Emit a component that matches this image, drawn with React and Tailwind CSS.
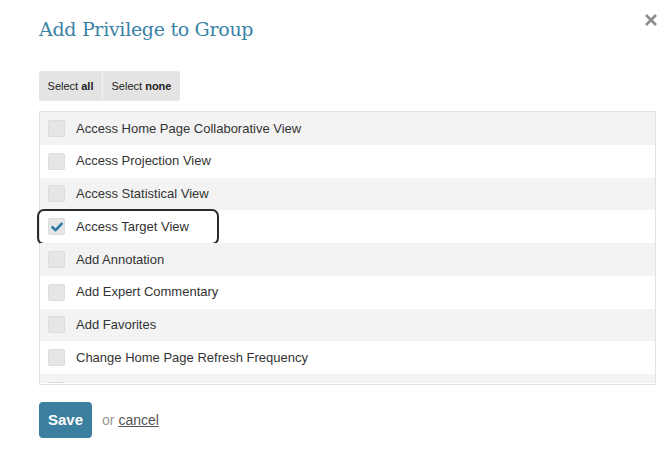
import React, { useState } from 'react';

const privileges = [
  'Access Home Page Collaborative View',
  'Access Projection View',
  'Access Statistical View',
  'Access Target View',
  'Add Annotation',
  'Add Expert Commentary',
  'Add Favorites',
  'Change Home Page Refresh Frequency',
];

const Check = ({ checked }) => (
  <span className="w-[17px] h-[17px] shrink-0 rounded-[2px] bg-[#e6e6e6] border border-[#dcdcdc] flex items-center justify-center">
    {checked && (
      <svg width="12" height="10" viewBox="0 0 12 10">
        <path d="M1.5 5.2 L4.6 8.2 L10.6 1.8" fill="none" stroke="#2f7ca3" strokeWidth="2.6" strokeLinecap="round" strokeLinejoin="round" />
      </svg>
    )}
  </span>
);

export default function App() {
  const [selected, setSelected] = useState(['Access Target View']);

  const toggle = (name) =>
    setSelected((s) => (s.includes(name) ? s.filter((x) => x !== name) : [...s, name]));

  return (
    <div className="w-[669px] h-[449px] bg-white relative font-['Liberation_Sans',Arial,sans-serif] text-[#333]">
      <button className="absolute top-[13px] left-[644px] w-[14px] h-[14px]" aria-label="Close">
        <svg width="14" height="14" viewBox="0 0 14 14">
          <path d="M2 2 L12 12 M12 2 L2 12" stroke="#8c8c8c" strokeWidth="2.6" />
        </svg>
      </button>

      <div className="pl-[39px] pr-[13px] pt-[15px]">
        <h1 className="font-['DejaVu_Serif',serif] text-[19px] tracking-[-0.3px] leading-[28px] text-[#3b83a6]">
          Add Privilege to Group
        </h1>

        <div className="mt-[28px] flex w-max rounded-[3px] overflow-hidden bg-[#e4e4e4] text-[11px] text-[#222]">
          <button className="h-[30px] w-[64px] border-r border-[#f2f2f2]">
            Select <span className="font-bold">all</span>
          </button>
          <button className="h-[30px] w-[77px]">
            Select <span className="font-bold">none</span>
          </button>
        </div>

        <div className="mt-[10px] border border-[#e2e2e2] h-[274px] flex flex-col">
          {privileges.map((name, i) => {
            const checked = selected.includes(name);
            return (
              <div
                key={name}
                className={`flex items-center shrink-0 h-[32.75px] ${i % 2 === 0 ? 'bg-[#f3f3f3]' : 'bg-white'}`}
              >
                <label
                  onClick={() => toggle(name)}
                  className={`flex items-center h-[32px] pl-[8px] gap-[11px] text-[13px] cursor-pointer ${checked ? 'w-[178px] -ml-px outline-2 outline-[#2b2b2b] rounded-[5px] pl-[9px]' : ''}`}
                >
                  <Check checked={checked} />
                  <span>{name}</span>
                </label>
              </div>
            );
          })}
          {/* next row, scrolled mostly out of view */}
          <div className="h-[9px] shrink-0 overflow-hidden bg-[#f3f3f3] pl-[8px] pt-[8px]">
            <Check checked={false} />
          </div>
        </div>

        <div className="mt-[17px] flex items-center">
          <button className="h-[36px] w-[53px] rounded-[4px] bg-[#3a7f9f] text-white font-bold text-[15px]">
            Save
          </button>
          <span className="ml-[10px] text-[14px] text-[#999]">or</span>
          <a href="#" className="ml-[4px] text-[14px] text-[#555] underline">
            cancel
          </a>
        </div>
      </div>
    </div>
  );
}
